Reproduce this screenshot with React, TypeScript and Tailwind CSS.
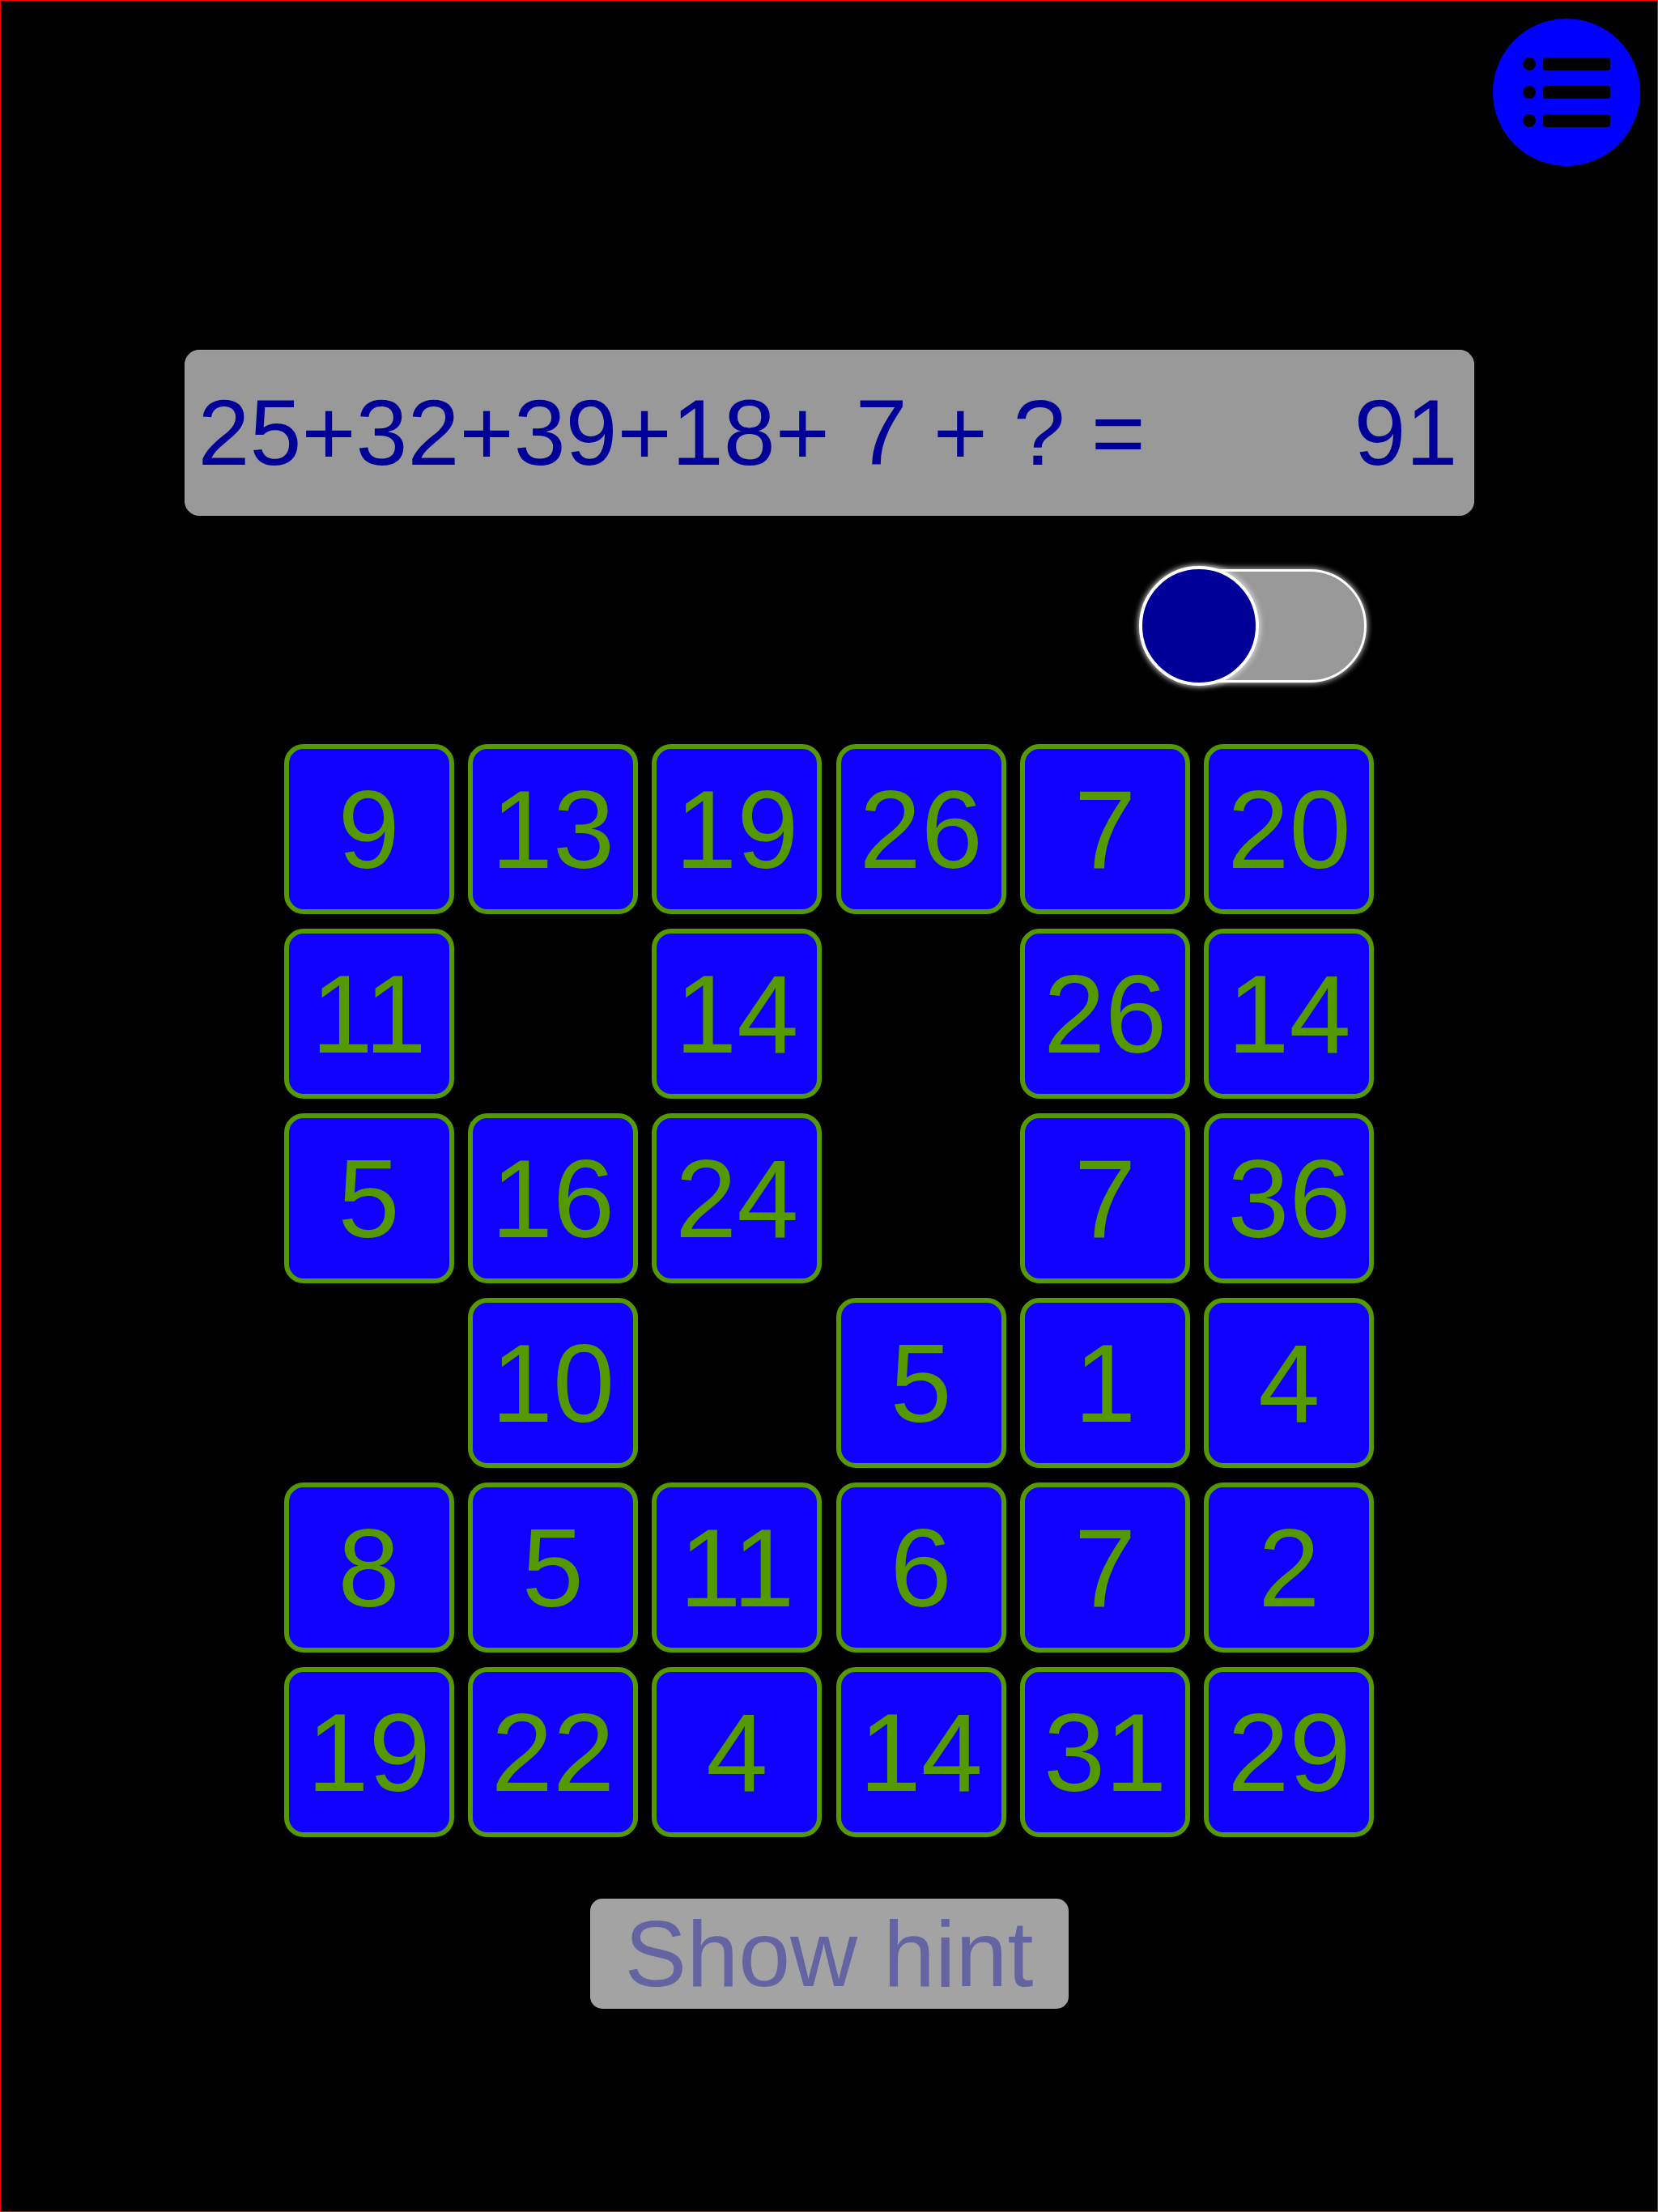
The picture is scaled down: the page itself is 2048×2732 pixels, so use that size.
import React from "react";

const rows: (number | null)[][] = [
  [9, 13, 19, 26, 7, 20],
  [11, null, 14, null, 26, 14],
  [5, 16, 24, null, 7, 36],
  [null, 10, null, 5, 1, 4],
  [8, 5, 11, 6, 7, 2],
  [19, 22, 4, 14, 31, 29],
];

function MenuIcon() {
  return (
    <svg width="108" height="86" viewBox="0 0 108 86" fill="#000">
      <circle cx="8" cy="8" r="8" />
      <circle cx="8" cy="43" r="8" />
      <circle cx="8" cy="78" r="8" />
      <rect x="25" y="0" width="83" height="16" rx="4" />
      <rect x="25" y="35" width="83" height="16" rx="4" />
      <rect x="25" y="70" width="83" height="16" rx="4" />
    </svg>
  );
}

export default function App() {
  return (
    <div
      className="relative box-border flex h-[2732px] w-[2048px] flex-col items-center border border-[#ff0000] bg-black"
      style={{ fontFamily: '"Liberation Sans", Arial, sans-serif' }}
    >
      {/* floating menu button */}
      <button className="absolute right-[21px] top-[22px] flex h-[182px] w-[182px] items-center justify-center rounded-full bg-[#0000ff]">
        <MenuIcon />
      </button>

      {/* equation */}
      <div className="mt-[431px] flex h-[205px] w-[1593px] items-center justify-between rounded-[18px] border border-[#a6a6a6] bg-[#999999] pl-[16px] pr-[19px] text-[115px] leading-none text-[#000099]">
        <span className="whitespace-pre">25+32+39+18+ 7 + ? =</span>
        <span>91</span>
      </div>

      {/* mode switch */}
      <div className="mt-[61px] flex w-[1593px] justify-end pr-[133px]">
        <div className="relative h-[150px] w-[281px]">
          <div className="absolute left-[5px] top-[5px] box-border h-[140px] w-[276px] rounded-full border-[3px] border-white bg-[#999999] shadow-[0_0_6px_2px_rgba(255,255,255,0.6)]" />
          <div className="absolute left-0 top-[1px] box-border h-[148px] w-[148px] rounded-full border-[4px] border-white bg-[#000099] shadow-[0_0_6px_2px_rgba(255,255,255,0.6)]" />
        </div>
      </div>

      {/* number tiles */}
      <div className="mt-[71px] grid grid-cols-[repeat(6,210px)] gap-x-[17.4px] gap-y-[18px]">
        {rows.flatMap((row, r) =>
          row.map((n, c) =>
            n === null ? (
              <div key={`${r}-${c}`} className="h-[210px] w-[210px]" />
            ) : (
              <div
                key={`${r}-${c}`}
                className="box-border flex h-[210px] w-[210px] items-center justify-center rounded-[24px] border-[6px] border-[#559900] bg-[#1000ff] text-[137px] leading-none text-[#559900]"
              >
                {n}
              </div>
            )
          )
        )}
      </div>

      {/* hint */}
      <button className="mt-[76px] flex h-[136px] w-[591px] items-center justify-center rounded-[15px] bg-[#a3a3a3] text-[115px] leading-none text-[#6464a3]">
        Show hint
      </button>
    </div>
  );
}
